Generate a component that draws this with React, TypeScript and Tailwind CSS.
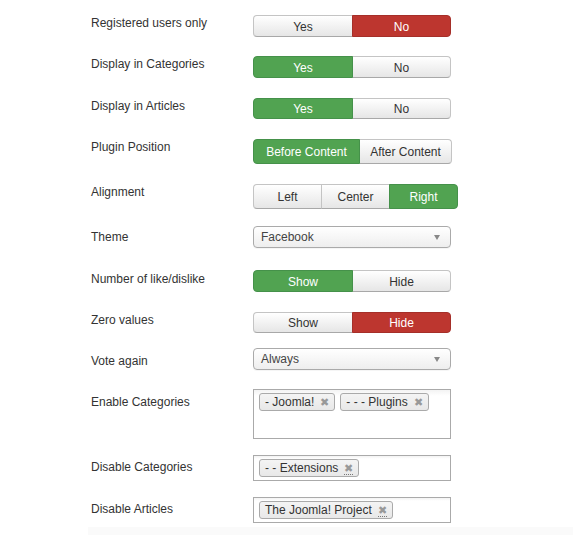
import React from "react";

type Opt = { label: string; w: string; tone?: "green" | "red" };

const toneCls = {
  green: "bg-[#51a351] border-[#45914a] text-white",
  red: "bg-[#bd362f] border-[#a52f29] text-white",
};

function BtnGroup({ opts, h }: { opts: Opt[]; h: string }) {
  return (
    <div className={`flex ${h}`}>
      {opts.map((o, i) => {
        const first = i === 0;
        const last = i === opts.length - 1;
        return (
          <div
            key={o.label}
            className={`${o.w} flex items-center justify-center border pt-px text-[12px] ${
              first ? "rounded-l-[4px]" : "-ml-px"
            } ${last ? "rounded-r-[4px]" : ""} ${
              o.tone
                ? toneCls[o.tone] + " relative z-10"
                : "bg-gradient-to-b from-white to-[#e6e6e6] border-[#c4c4c4] border-b-[#a8a8a8] text-[#333]"
            }`}
          >
            {o.label}
          </div>
        );
      })}
    </div>
  );
}

function Select({ value }: { value: string }) {
  return (
    <div className="w-[198px] h-[22px] flex items-center justify-between rounded-[4px] border border-[#aaa] bg-gradient-to-b from-white to-[#eeeeee] pl-[7px] pr-[10px] text-[12px] text-[#444] shadow-[0_1px_0_rgba(0,0,0,0.04)]">
      <span>{value}</span>
      <span className="w-0 h-0 border-l-[3.5px] border-r-[3.5px] border-t-[5px] border-l-transparent border-r-transparent border-t-[#888]" />
    </div>
  );
}

function Tag({ text, dotted }: { text: string; dotted?: boolean }) {
  return (
    <div className="relative mt-[3px] ml-[5px] h-[18px] flex items-center rounded-[3px] border border-[#aaa] bg-gradient-to-b from-[#f4f4f4] to-[#e8e8e8] pl-[5px] pr-[20px] text-[12px] leading-[13px] text-[#333]">
      {text}
      <span
        className={`absolute right-[5px] top-[2px] text-[11px] leading-[12px] text-[#999] ${
          dotted ? "border-b border-dotted border-[#777]" : ""
        }`}
      >
        ✖
      </span>
    </div>
  );
}

function MultiBox({ h, tags }: { h: string; tags: { t: string; d?: boolean }[] }) {
  return (
    <div className={`w-[198px] ${h} border border-[#aaa] bg-gradient-to-b from-[#f3f3f3] to-white to-[12%] flex flex-wrap items-start content-start`}>
      {tags.map((x) => (
        <Tag key={x.t} text={x.t} dotted={x.d} />
      ))}
    </div>
  );
}

function Row({
  mt,
  lt,
  label,
  children,
}: {
  mt: string;
  lt: string;
  label: string;
  children: React.ReactNode;
}) {
  return (
    <div className={`flex items-start ${mt}`}>
      <div className={`w-[162px] shrink-0 leading-[16px] text-[12px] text-[#333] ${lt}`}>{label}</div>
      {children}
    </div>
  );
}

export default function App() {
  return (
    <div className="relative w-[573px] h-[535px] overflow-hidden bg-white font-['Liberation_Sans',Arial,sans-serif]">
      <div className="flex flex-col pl-[91px] pt-[15px]">
        <Row mt="mt-0" lt="mt-0" label="Registered users only">
          <BtnGroup
            h="h-[22px]"
            opts={[
              { label: "Yes", w: "w-[100px]" },
              { label: "No", w: "w-[99px]", tone: "red" },
            ]}
          />
        </Row>
        <Row mt="mt-[19px]" lt="mt-0" label="Display in Categories">
          <BtnGroup
            h="h-[22px]"
            opts={[
              { label: "Yes", w: "w-[100px]", tone: "green" },
              { label: "No", w: "w-[99px]" },
            ]}
          />
        </Row>
        <Row mt="mt-[20px]" lt="mt-0" label="Display in Articles">
          <BtnGroup
            h="h-[21px]"
            opts={[
              { label: "Yes", w: "w-[100px]", tone: "green" },
              { label: "No", w: "w-[99px]" },
            ]}
          />
        </Row>
        <Row mt="mt-[20px]" lt="mt-0" label="Plugin Position">
          <BtnGroup
            h="h-[25px]"
            opts={[
              { label: "Before Content", w: "w-[107px]", tone: "green" },
              { label: "After Content", w: "w-[93px]" },
            ]}
          />
        </Row>
        <Row mt="mt-[20px]" lt="mt-0" label="Alignment">
          <BtnGroup
            h="h-[25px]"
            opts={[
              { label: "Left", w: "w-[69px]" },
              { label: "Center", w: "w-[69px]" },
              { label: "Right", w: "w-[69px]", tone: "green" },
            ]}
          />
        </Row>
        <Row mt="mt-[17px]" lt="mt-[3px]" label="Theme">
          <Select value="Facebook" />
        </Row>
        <Row mt="mt-[22px]" lt="mt-px" label="Number of like/dislike">
          <BtnGroup
            h="h-[22px]"
            opts={[
              { label: "Show", w: "w-[100px]", tone: "green" },
              { label: "Hide", w: "w-[99px]" },
            ]}
          />
        </Row>
        <Row mt="mt-[20px]" lt="mt-0" label="Zero values">
          <BtnGroup
            h="h-[21px]"
            opts={[
              { label: "Show", w: "w-[100px]" },
              { label: "Hide", w: "w-[99px]", tone: "red" },
            ]}
          />
        </Row>
        <Row mt="mt-[15px]" lt="mt-[5px]" label="Vote again">
          <Select value="Always" />
        </Row>
        <Row mt="mt-[19px]" lt="mt-[5px]" label="Enable Categories">
          <MultiBox
            h="h-[50px]"
            tags={[{ t: "- Joomla!" }, { t: "- - - Plugins" }]}
          />
        </Row>
        <Row mt="mt-[16px]" lt="mt-[4px]" label="Disable Categories">
          <MultiBox h="h-[26px]" tags={[{ t: "- - Extensions", d: true }]} />
        </Row>
        <Row mt="mt-[16px]" lt="mt-[4px]" label="Disable Articles">
          <MultiBox h="h-[26px]" tags={[{ t: "The Joomla! Project", d: true }]} />
        </Row>
      </div>
      <div className="absolute left-[88px] right-0 top-[527px] bottom-0 bg-[#fafafa]" />
    </div>
  );
}
